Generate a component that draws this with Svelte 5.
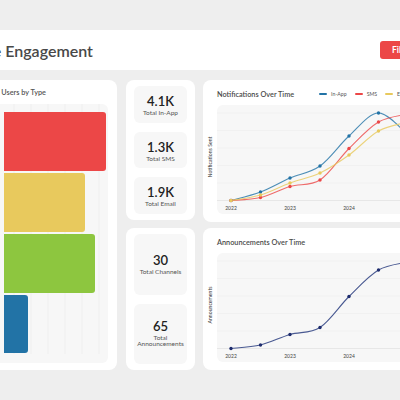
<script lang="ts">
	type Pt = [number, number];

	const xs = [14, 43.5, 73, 103, 132, 161.5, 191];

	const bars = [
		{ color: '#ec4747', width: 102, height: 59 },
		{ color: '#e8c95d', width: 81.5, height: 59 },
		{ color: '#8dc63f', width: 91.5, height: 58.5 },
		{ color: '#2273a6', width: 24, height: 58 }
	];

	const topStats = [
		{ value: '4.1K', label: 'Total In-App' },
		{ value: '1.3K', label: 'Total SMS' },
		{ value: '1.9K', label: 'Total Email' }
	];

	const bottomStats = [
		{ value: '30', label: 'Total Channels' },
		{ value: '65', label: 'Total Announcements' }
	];

	const notifications = [
		{ name: 'In-App', color: '#2273a6', ys: [95.5, 87, 73, 61, 31, 8, 30] },
		{ name: 'SMS', color: '#ec4747', ys: [95.5, 92.5, 81.5, 75, 43.5, 17, 9] },
		{ name: 'Email', color: '#e8c95d', ys: [95.5, 90, 78, 68, 50, 26, 17] }
	];

	const announcements = [95.5, 92, 81.5, 74.5, 43.5, 17, 9];

	const tickLabels = [
		{ x: 14, text: '2022' },
		{ x: 73, text: '2023' },
		{ x: 132, text: '2024' },
		{ x: 191, text: '2025' }
	];

	// catmull-rom through the points, same look as a monotone chart line
	function smooth(pts: Pt[]) {
		let d = `M${pts[0][0]} ${pts[0][1]}`;
		for (let i = 0; i < pts.length - 1; i++) {
			const p0 = pts[Math.max(i - 1, 0)];
			const p1 = pts[i];
			const p2 = pts[i + 1];
			const p3 = pts[Math.min(i + 2, pts.length - 1)];
			const c1x = p1[0] + (p2[0] - p0[0]) / 6;
			const c1y = p1[1] + (p2[1] - p0[1]) / 6;
			const c2x = p2[0] - (p3[0] - p1[0]) / 6;
			const c2y = p2[1] - (p3[1] - p1[1]) / 6;
			d += ` C${c1x} ${c1y} ${c2x} ${c2y} ${p2[0]} ${p2[1]}`;
		}
		return d;
	}

	const toPts = (ys: number[]): Pt[] => ys.map((y, i) => [xs[i], y]);
</script>

<div class="dashboard">
	<header class="topbar">
		<h1>Mobile Engagement</h1>
		<button class="filter">Filter</button>
	</header>

	<main class="grid">
		<section class="card users">
			<h2>Active Users by Type</h2>
			<div class="bar-plot">
				{#each bars as bar}
					<div class="bar" style="width: {bar.width}px; height: {bar.height}px; background: {bar.color}"></div>
				{/each}
			</div>
		</section>

		<div class="stats">
			<section class="card stat-card top">
				{#each topStats as s}
					<div class="stat">
						<strong>{s.value}</strong>
						<span>{s.label}</span>
					</div>
				{/each}
			</section>
			<section class="card stat-card bottom">
				{#each bottomStats as s}
					<div class="stat">
						<strong>{s.value}</strong>
						<span>{s.label}</span>
					</div>
				{/each}
			</section>
		</div>

		<div class="charts">
			<section class="card chart-card first">
				<div class="chart-head">
					<h3>Notifications Over Time</h3>
					<ul class="legend">
						{#each notifications as n}
							<li><i style="background: {n.color}"></i>{n.name}</li>
						{/each}
					</ul>
				</div>
				<div class="chart-body">
					<span class="y-title">Notifications Sent</span>
					<div class="plot">
						<svg viewBox="0 0 240 109" width="240" height="109">
							{#each [8, 25.5, 43, 60.5, 78] as y}
								<line x1="0" x2="240" y1={y} y2={y} class="gridline" />
							{/each}
							<line x1="0" x2="240" y1="95.5" y2="95.5" class="axis" />
							{#each tickLabels as t}
								<text x={t.x} y="104.5" class="tick">{t.text}</text>
							{/each}
							{#each notifications as n}
								<path d={smooth(toPts(n.ys))} fill="none" stroke={n.color} stroke-width="1.1" opacity="0.8" />
							{/each}
							{#each notifications as n}
								{#each toPts(n.ys) as p}
									<circle cx={p[0]} cy={p[1]} r="1.7" fill={n.color} />
								{/each}
							{/each}
						</svg>
					</div>
				</div>
			</section>

			<section class="card chart-card">
				<div class="chart-head">
					<h3>Announcements Over Time</h3>
				</div>
				<div class="chart-body">
					<span class="y-title">Announcements</span>
					<div class="plot">
						<svg viewBox="0 0 240 109" width="240" height="109">
							{#each [8, 25.5, 43, 60.5, 78] as y}
								<line x1="0" x2="240" y1={y} y2={y} class="gridline" />
							{/each}
							<line x1="0" x2="240" y1="95.5" y2="95.5" class="axis" />
							{#each tickLabels as t}
								<text x={t.x} y="104.5" class="tick">{t.text}</text>
							{/each}
							<path d={smooth(toPts(announcements))} fill="none" stroke="#4a5a92" stroke-width="1.1" />
							{#each toPts(announcements) as p}
								<circle cx={p[0]} cy={p[1]} r="1.7" fill="#1f2d6e" />
							{/each}
						</svg>
					</div>
				</div>
			</section>
		</div>
	</main>
</div>

<style>
	:global(body) {
		background: #eeeeee;
		overflow: hidden;
	}

	.dashboard {
		width: 600px;
		height: 400px;
		margin-left: -100px;
		padding-top: 30px;
		box-sizing: border-box;
		font-family: Lato, 'Open Sans', sans-serif;
		color: #333;
	}

	/* ── Header ── */
	.topbar {
		height: 40px;
		background: #fff;
		display: flex;
		align-items: center;
		justify-content: space-between;
		padding-left: 52px;
	}

	h1 {
		margin: 0;
		font-size: 16px;
		font-weight: 600;
		color: #484848;
	}

	.filter {
		width: 60px;
		height: 18px;
		margin-right: 60px;
		padding: 0 0 0 12px;
		text-align: left;
		border: none;
		border-radius: 3px;
		background: #ec4747;
		color: #fff;
		font: 700 8.5px Lato, sans-serif;
	}

	.grid {
		display: flex;
		gap: 9px;
		margin-top: 10px;
	}

	.card {
		background: #fff;
		border-radius: 8px;
	}

	/* ── Users ── */
	.users {
		width: 217px;
		height: 290px;
		flex-shrink: 0;
		box-sizing: border-box;
		padding: 8px 9px 7px 8px;
		display: flex;
		flex-direction: column;
	}

	h2 {
		margin: 0 62px 6px 0;
		height: 10px;
		line-height: 10px;
		text-align: right;
		font-size: 7.3px;
		font-weight: 600;
		color: #555;
	}

	.bar-plot {
		flex: 1;
		border-radius: 6px;
		background-color: #f7f7f7;
		background-image: repeating-linear-gradient(
			to right,
			transparent 0 16.2px,
			#eeeeee 16.2px 17px
		);
		background-position: 4.5px 0;
		background-size: 85px 250px;
		background-repeat: repeat-x;
		padding: 8px 0 0 95.5px;
		display: flex;
		flex-direction: column;
		gap: 2px;
	}

	.bar {
		border-radius: 0 3px 3px 0;
	}

	/* ── Stats ── */
	.stats {
		width: 69px;
		flex-shrink: 0;
		display: flex;
		flex-direction: column;
		gap: 8px;
	}

	.stat-card {
		box-sizing: border-box;
		padding: 6px 8px;
		display: flex;
		flex-direction: column;
	}

	.stat-card.top {
		height: 140px;
		gap: 9px;
	}

	.stat-card.bottom {
		height: 142px;
		gap: 9px;
	}

	.stat {
		flex: 1;
		border-radius: 6px;
		background: #f7f7f7;
		display: flex;
		flex-direction: column;
		align-items: center;
		justify-content: center;
		text-align: center;
		gap: 2px;
	}

	.stat-card.top .stat {
		padding-top: 3px;
	}

	.stat strong {
		font-size: 13px;
		line-height: 13px;
		font-weight: 600;
		color: #222;
	}

	.stat span {
		font-size: 6.5px;
		line-height: 6.5px;
		color: #555;
	}

	/* ── Charts ── */
	.charts {
		display: flex;
		flex-direction: column;
		gap: 6px;
		margin-left: -1px;
	}

	.chart-card {
		width: 297px;
		height: 142px;
		box-sizing: border-box;
		padding: 8px 0 0 14px;
	}

	.chart-head {
		height: 12px;
		margin-bottom: 5px;
		display: flex;
		align-items: center;
	}

	h3 {
		margin: 0;
		font-size: 7.3px;
		font-weight: 600;
		color: #4a4a4a;
		white-space: nowrap;
	}

	.legend {
		list-style: none;
		margin: 0 0 0 25px;
		padding: 0;
		display: flex;
		gap: 8px;
	}

	.legend li {
		display: flex;
		align-items: center;
		gap: 4px;
		font-size: 5.2px;
		color: #555;
	}

	.legend i {
		width: 8px;
		height: 2.5px;
		border-radius: 2px;
	}

	.chart-body {
		position: relative;
	}

	.y-title {
		position: absolute;
		left: -7px;
		top: 52px;
		transform: translate(-50%, -50%) rotate(-90deg);
		font-size: 5.2px;
		color: #333;
		white-space: nowrap;
	}

	.plot {
		width: 240px;
		height: 109px;
		border-radius: 6px;
		background: #f7f7f7;
		overflow: hidden;
	}

	svg {
		display: block;
	}

	.gridline {
		stroke: #eeeeee;
		stroke-width: 0.7;
	}

	.axis {
		stroke: #e2e2e2;
		stroke-width: 0.8;
	}

	.tick {
		font-size: 5px;
		fill: #444;
		text-anchor: middle;
	}
</style>
